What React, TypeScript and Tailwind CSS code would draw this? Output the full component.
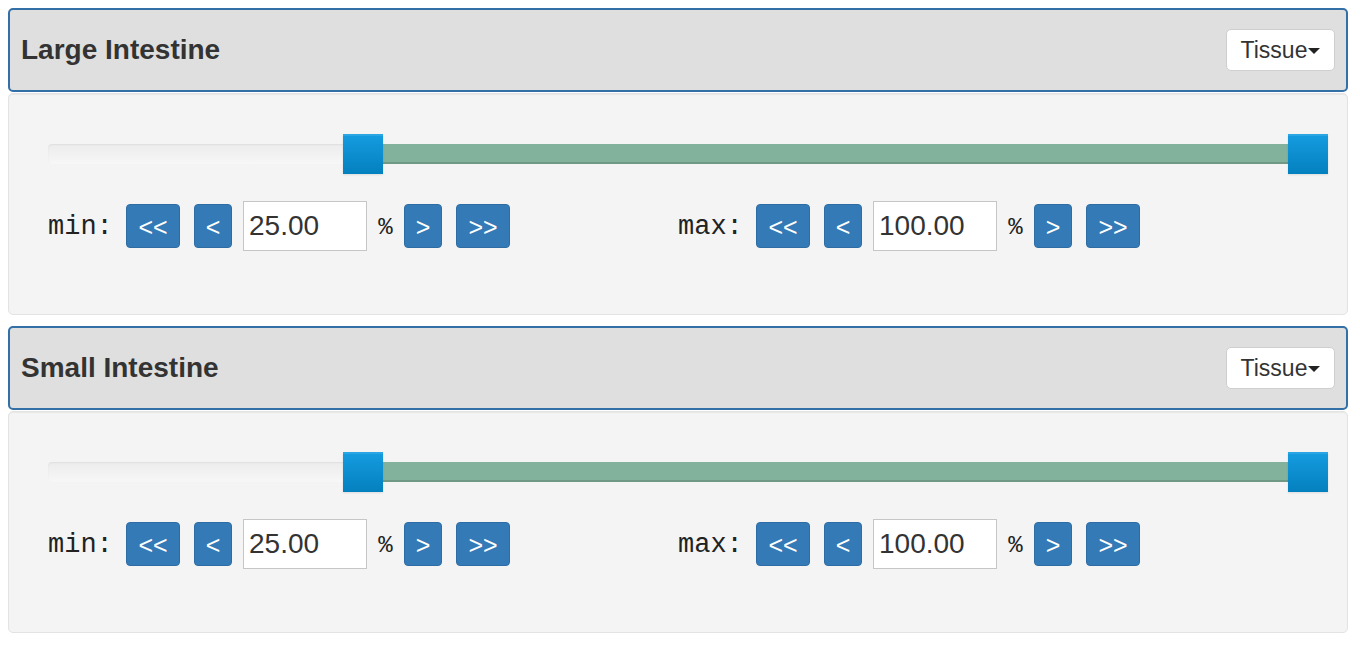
const sections = [
  { title: "Large Intestine", min: 25, max: 100 },
  { title: "Small Intestine", min: 25, max: 100 },
];

function StepButton({ label, wide }: { label: string; wide?: boolean }) {
  return (
    <button
      className={
        (wide ? "w-[54px]" : "w-[38px]") +
        " h-[44px] shrink-0 rounded-[4px] border border-[#2e6da4] bg-[#337ab7] pt-[3px] text-[25px] leading-none text-white font-['Liberation_Sans',Arial,sans-serif]"
      }
    >
      {label}
    </button>
  );
}

function Bound({ name, value }: { name: string; value: number }) {
  return (
    <div className="flex items-center">
      <span className="w-[78px] shrink-0 pt-[3px] font-['Liberation_Mono','Courier_New',monospace] text-[27px] text-[#222]">
        {name}:
      </span>
      <StepButton label="<<" wide />
      <div className="ml-[14px]">
        <StepButton label="<" />
      </div>
      <input
        readOnly
        value={value.toFixed(2)}
        className="ml-[11px] h-[50px] w-[124px] border border-[#c6c6c6] bg-white pl-[5px] text-[28px] text-[#333] outline-none font-['Liberation_Sans',Arial,sans-serif]"
      />
      <span className="w-[37px] pt-[3px] text-center font-['Liberation_Mono','Courier_New',monospace] text-[24px] text-[#222]">%</span>
      <StepButton label=">" />
      <div className="ml-[14px]">
        <StepButton label=">>" wide />
      </div>
    </div>
  );
}

function RangeSlider({ min, max }: { min: number; max: number }) {
  return (
    <div className="relative h-[40px]">
      <div className="absolute left-0 right-0 top-[10px] h-[20px] rounded-[4px] bg-gradient-to-b from-[#ececec] to-[#f7f7f7] shadow-[inset_0_1px_2px_rgba(0,0,0,0.06)]" />
      <div
        className="absolute top-[10px] h-[20px] bg-[#83b29c] border-b-2 border-[#6f9985]"
        style={{ left: `${min}%`, width: `${max - min}%` }}
      />
      {[min, max].map((v, i) => (
        <div
          key={i}
          className="absolute top-0 -ml-[20px] h-[40px] w-[40px] border-t-2 border-[#2aa6e4] bg-gradient-to-b from-[#149bdf] to-[#0480be] shadow-[0_1px_2px_rgba(0,0,0,0.1)]"
          style={{ left: `${v}%` }}
        />
      ))}
    </div>
  );
}

export default function App() {
  return (
    <div className="min-h-screen bg-white pl-[8px] pr-[12px] pt-[8px] font-['Liberation_Sans',Arial,sans-serif]">
      {sections.map((s) => (
        <div key={s.title} className="mb-[11px]">
          <div className="flex h-[84px] items-center justify-between rounded-[5px] border-2 border-[#3370a8] bg-[#dfdfdf] pl-[11px] pr-[11px]">
            <h3 className="text-[28px] font-bold text-[#333]">{s.title}</h3>
            <button className="flex h-[42px] w-[109px] items-center justify-center rounded-[5px] border border-[#cfcfcf] bg-white text-[23px] text-[#333]">
              Tissue
              <svg width="12" height="6" viewBox="0 0 12 6" className="ml-[1px] mt-[2px]">
                <path d="M0 0h12L6 6z" fill="#222" />
              </svg>
            </button>
          </div>
          <div className="mt-px h-[222px] rounded-[5px] border border-[#e3e3e3] bg-[#f4f4f4] px-[39px] pt-[40px] shadow-[inset_0_1px_1px_rgba(0,0,0,0.05)]">
            <RangeSlider min={s.min} max={s.max} />
            <div className="mt-[27px] grid grid-cols-2">
              <Bound name="min" value={s.min} />
              <Bound name="max" value={s.max} />
            </div>
          </div>
        </div>
      ))}
    </div>
  );
}
